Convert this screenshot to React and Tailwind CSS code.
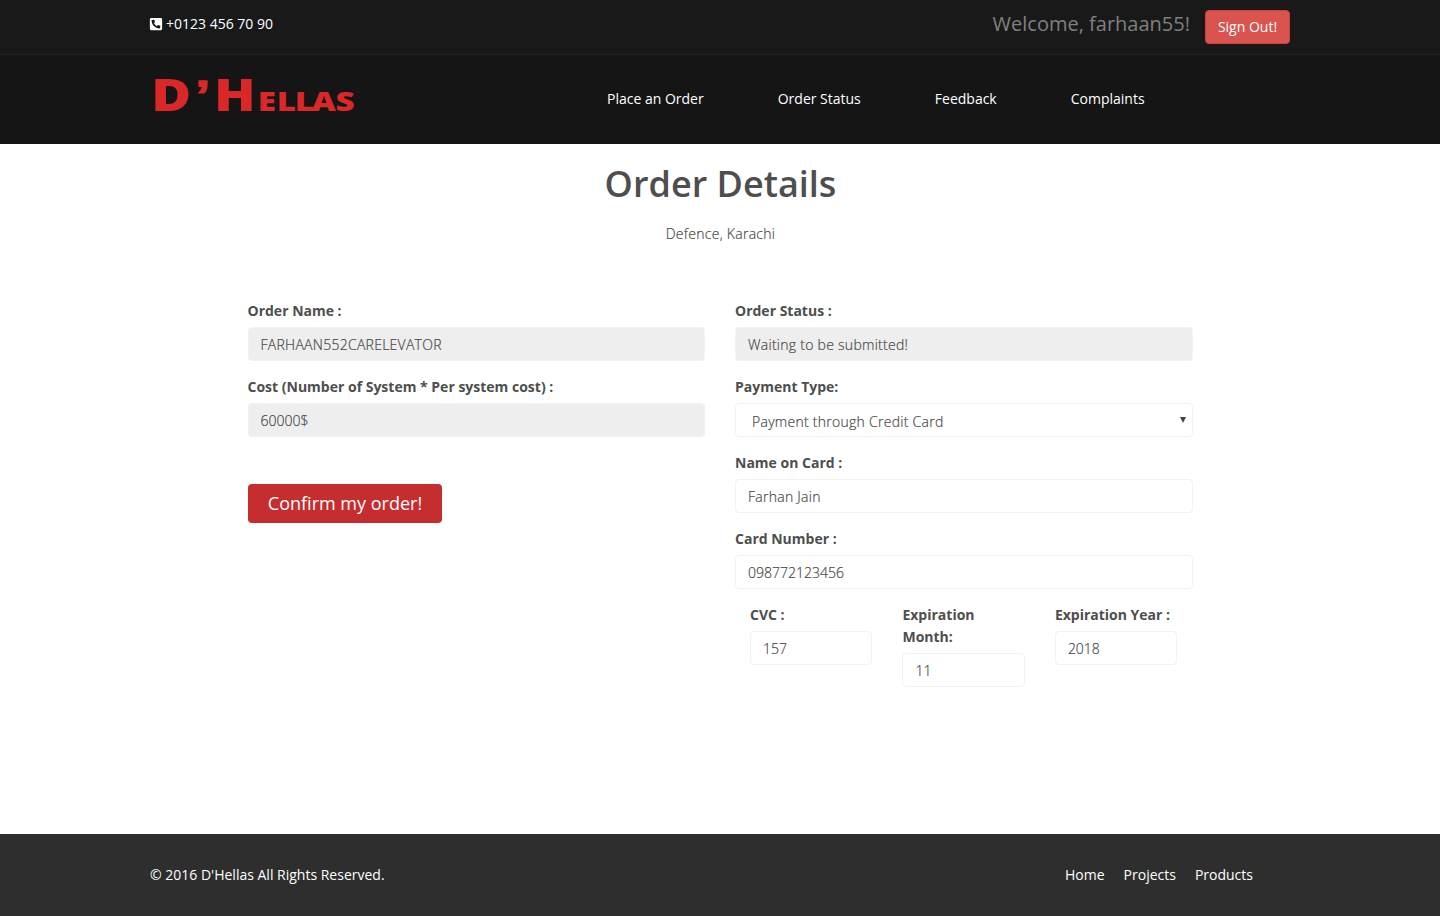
import React from "react";
import { FaPhoneSquareAlt } from "react-icons/fa";

const labelClass = "block text-sm leading-[22px] font-bold mb-[5px]";
const bodyText = "text-sm font-light text-[#4a4a4a] [-webkit-text-stroke:0.2px]";
const boxClass = `block w-full h-[34px] rounded border border-[#f2f2f2] px-3 outline-none ${bodyText}`;

function Field({ label, value, disabled, className = "" }) {
  const tracking = /^\d/.test(value) ? "" : "tracking-[0.27px]";
  return (
    <div className={className}>
      <label className={labelClass}>{label}</label>
      <input className={`${boxClass} ${tracking} ${disabled ? "bg-[#eeeeee]" : "bg-white"}`} defaultValue={value} readOnly={disabled} />
    </div>
  );
}

function Logo() {
  return (
    <svg width="220" height="70" viewBox="0 0 220 70" className="block font-extrabold" fill="#da2828" aria-label="D'Hellas">
      <g transform="scale(1.25 1)">
        <text y="50" fontSize="43.6">
          <tspan x="1">D</tspan>
          <tspan x="36.4" y="49" fontSize="43" stroke="#da2828" strokeWidth="1.3" className="font-['Liberation_Sans'] font-bold">’</tspan>
          <tspan x="51.2" y="50">H</tspan>
          <tspan x="86.3 101.4 115.8 129.4 148.4" fontSize="26.5">ELLAS</tspan>
        </text>
      </g>
    </svg>
  );
}

export default function App() {
  return (
    <div className="flex h-[916px] flex-col bg-white font-['Open_Sans',sans-serif] text-sm text-[#4e4e4e]">
      <div className="h-[55px] border-b border-[#222222] bg-[#191919]">
        <div className="mx-auto flex w-[1140px] items-start justify-between pt-2.5 text-white">
          <div className="mt-[3px] flex items-center gap-[3px] leading-[22px]">
            <FaPhoneSquareAlt className="-ml-px" size={14} />
            <span>+0123 456 70 90</span>
          </div>
          <div className="flex items-start">
            <span className="mr-[15px] text-xl leading-7 text-[#808080]">Welcome, farhaan55!</span>
            <button className="h-[34px] w-[85px] rounded border border-[#d43f3a] bg-[#d9534f] text-sm">Sign Out!</button>
          </div>
        </div>
      </div>
      <header className="h-[89px] bg-[#151515]">
        <div className="mx-auto flex w-[1140px] items-start">
          <div className="mt-1.5 w-[457px]">
            <Logo />
          </div>
          <nav className="mt-[33px] flex gap-[74px] leading-[22px] text-white">
            <a>Place an Order</a>
            <a>Order Status</a>
            <a>Feedback</a>
            <a>Complaints</a>
          </nav>
        </div>
      </header>
      <main className="flex-1">
        <h1 className="pt-5 pl-px text-center text-4xl leading-10 font-semibold">Order Details</h1>
        <p className={`mt-[19px] pl-px text-center leading-[22px]! tracking-[0.27px] ${bodyText}`}>Defence, Karachi</p>
        <div className="mx-auto mt-[55px] flex w-[945px] gap-[30px]">
          <div className="flex flex-1 flex-col gap-[15px]">
            <Field label="Order Name :" value="FARHAAN552CARELEVATOR" disabled />
            <Field label="Cost (Number of System * Per system cost) :" value="60000$" disabled />
            <button className="mt-8 h-[39px] w-[194px] rounded bg-[#c52d2f] pb-0.5 pl-px text-lg leading-none text-white">Confirm my order!</button>
          </div>
          <div className="flex flex-1 flex-col gap-[15px]">
            <Field label="Order Status :" value="Waiting to be submitted!" disabled />
            <div>
              <label className={labelClass}>Payment Type:</label>
              <div className={`${boxClass} flex! items-center justify-between bg-white`}>
                <span className="mt-px ml-1 h-[19px] leading-[21px] tracking-[0.27px]">Payment through Credit Card</span>
                <svg width="6" height="6" viewBox="0 0 6 6" className="-mr-1.5" fill="#444444">
                  <path d="M0 0h6L3 6z" />
                </svg>
              </div>
            </div>
            <Field label="Name on Card :" value="Farhan Jain" />
            <Field label="Card Number :" value="098772123456" />
            <div className="flex gap-[30px] px-[15px]">
              <Field className="w-[122.45px]" label="CVC :" value="157" />
              <Field className="w-[122.45px]" label="Expiration Month:" value="11" />
              <Field className="w-[122.45px]" label="Expiration Year :" value="2018" />
            </div>
          </div>
        </div>
      </main>
      <footer className="h-[82px] bg-[#2e2e2e] pt-[30px]">
        <div className="mx-auto flex w-[1140px] justify-between pr-[37px] leading-[22px] text-white">
          <span>© 2016 D'Hellas All Rights Reserved.</span>
          <div className="flex gap-[19px]">
            <a>Home</a>
            <a>Projects</a>
            <a>Products</a>
          </div>
        </div>
      </footer>
    </div>
  );
}
